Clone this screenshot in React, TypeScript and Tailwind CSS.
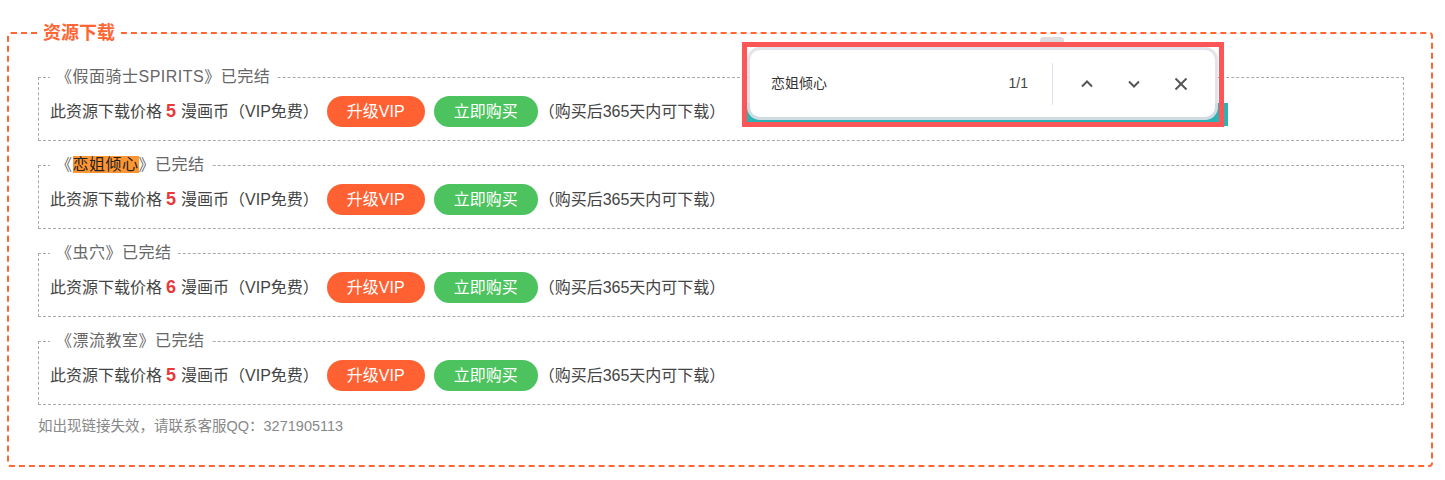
import React from "react";

const items = [
  { title: "假面骑士SPIRITS", price: 5, hl: false },
  { title: "恋姐倾心", price: 5, hl: true },
  { title: "虫穴", price: 6, hl: false },
  { title: "漂流教室", price: 5, hl: false },
];

export default function App() {
  return (
    <div
      className="relative w-[1445px] h-[480px] bg-white overflow-hidden"
      style={{ fontFamily: '"Liberation Sans", "Noto Sans CJK SC", sans-serif' }}
    >
      <fieldset className="ml-[7px] mt-[21px] w-[1426px] border-2 border-dashed border-[#ff6633] rounded-[4px] pl-[29px] pr-[27px] pt-[21px] pb-[29px]">
        <legend className="px-[5px] text-[18px] leading-[24px] font-bold text-[#ff6633]">资源下载</legend>
        {items.map((it, i) => (
          <fieldset
            key={i}
            className="mb-[13px] border border-dashed border-[#aaaaaa] pl-[11px] pr-[11px] pt-[8px] pb-[13px]"
          >
            <legend className="px-[6px] text-[16px] leading-[22px] text-[#666666] tracking-[0.5px]">
              《{it.hl ? <span className="bg-[#ff9632] text-[#222]">{it.title}</span> : it.title}》已完结
            </legend>
            <div className="flex items-center h-[31px] text-[16px] text-[#444444]">
              <span>此资源下载价格</span>
              <span className="ml-[4px] mr-[5px] text-[18px] font-bold text-[#e73b3b]">{it.price}</span>
              <span>漫画币（VIP免费）</span>
              <span className="ml-[8px] h-[31px] px-[20px] rounded-full bg-[#ff6133] text-white flex items-center">升级VIP</span>
              <span className="ml-[9px] h-[31px] px-[20px] rounded-full bg-[#4cc35e] text-white flex items-center">立即购买</span>
              <span className="ml-[1px]">（购买后365天内可下载）</span>
            </div>
          </fieldset>
        ))}
        <p className="-mt-[2px] text-[14.5px] leading-[20px] text-[#888888]">如出现链接失效，请联系客服QQ：3271905113</p>
      </fieldset>

      {/* find bar overlay */}
      <div className="absolute left-[745px] top-[103px] w-[483px] h-[23px] bg-[#2bb3b5]" />
      <div className="absolute left-[1040px] top-[37px] w-[24px] h-[7px] rounded-full bg-[#dcdce0]" />
      <div className="absolute left-[750px] top-[50px] w-[465px] h-[67px] bg-white rounded-[10px] shadow-[0_0_0_3px_rgba(225,225,232,0.9),0_1px_4px_rgba(0,0,0,0.15)] flex items-center">
        <span className="ml-[21px] text-[14px] text-[#333333]">恋姐倾心</span>
        <span className="ml-auto text-[14px] text-[#444444]">1/1</span>
        <span className="ml-[24px] w-[1px] h-[42px] bg-[#dfe5ef]" />
        <svg className="ml-[26px]" width="16" height="16" viewBox="0 0 16 16" fill="none" stroke="#555" strokeWidth="2">
          <polyline points="3,10.5 8,5.5 13,10.5" />
        </svg>
        <svg className="ml-[31px]" width="16" height="16" viewBox="0 0 16 16" fill="none" stroke="#555" strokeWidth="2">
          <polyline points="3,5.5 8,10.5 13,5.5" />
        </svg>
        <svg className="ml-[31px] mr-[26px]" width="16" height="16" viewBox="0 0 16 16" fill="none" stroke="#555" strokeWidth="2">
          <line x1="2.5" y1="2.5" x2="13.5" y2="13.5" />
          <line x1="13.5" y1="2.5" x2="2.5" y2="13.5" />
        </svg>
      </div>
      <div className="absolute left-[742px] top-[42px] w-[482px] h-[85px] border-[5px] border-[#fd5656]" />
    </div>
  );
}
